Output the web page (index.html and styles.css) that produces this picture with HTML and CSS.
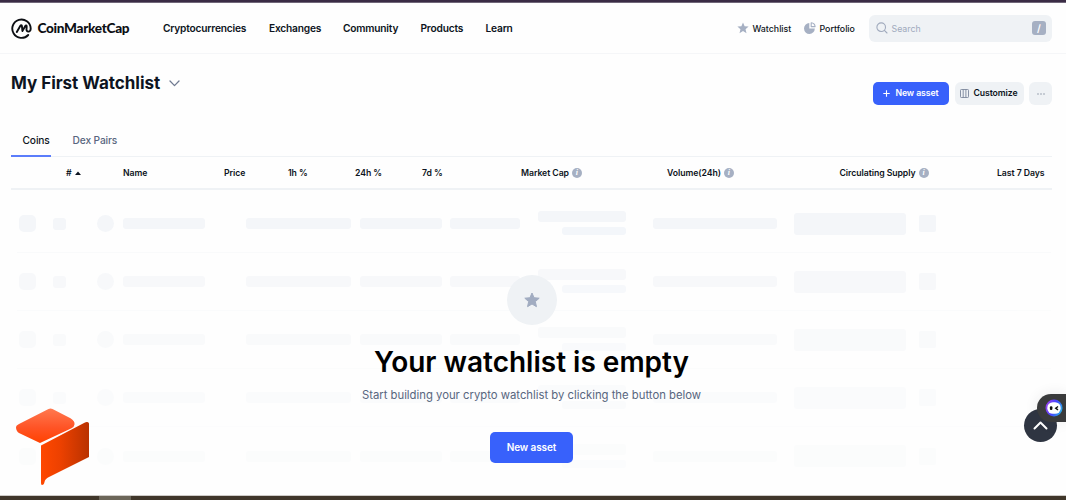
FILE: index.html
```html
<!DOCTYPE html>
<html lang="en">
<head>
<meta charset="utf-8">
<title>My First Watchlist | CoinMarketCap</title>
<link rel="stylesheet" href="styles.css">
</head>
<body>
<div class="page">
  <div class="strip-top"></div>
  <header class="header">
    <div class="brand">
      <svg class="brand-icon" width="21" height="21" viewBox="0 0 21 21" fill="none" stroke="#0d0f14" stroke-width="1.9" stroke-linecap="round" stroke-linejoin="round">
        <path d="M17.2 17A9.2 9.2 0 1 1 19.7 10.4C19.7 12.5 18.8 13.6 17.4 13.6C16 13.6 15.4 12.6 15.5 11.2L15.7 8.4C15.7 7.2 14.8 7.1 14.3 8L11.4 13L10.9 7.9C10.8 6.9 9.9 6.8 9.4 7.7L5.8 13.9"/>
      </svg>
      <span class="brand-name">CoinMarketCap</span>
    </div>
    <nav class="nav">
      <a class="n1">Cryptocurrencies</a><a class="n2">Exchanges</a><a class="n3">Community</a><a class="n4">Products</a><a class="n5">Learn</a>
    </nav>
    <div class="quick">
      <a class="q1"><svg width="12" height="12" viewBox="0 0 24 24" fill="#a6b0c3"><path d="M12 1l3.2 7.4 8 .7-6.100 5.300 1.900 7.900L12 18.100 5 22.300l1.900-7.900L.8 9.100l8-.7z"/></svg><span>Watchlist</span></a>
      <a class="q2"><svg width="12" height="12" viewBox="0 0 12 12" fill="#a6b0c3"><path d="M5.300 1.100v5.300h5.500A5.400 5.400 0 1 1 5.300 1.100z"/><path d="M7.200.7a4.300 4.300 0 0 1 3.900 3.900H7.200z" fill="none" stroke="#a6b0c3" stroke-width="1.100" stroke-linejoin="round"/></svg><span>Portfolio</span></a>
    </div>
    <div class="search">
      <svg width="12" height="12" viewBox="0 0 12 12" fill="none" stroke="#a0aabd" stroke-width="1.100" stroke-linecap="round"><circle cx="5.200" cy="5.200" r="4.300"/><path d="M8.400 8.400l2.600 2.600"/></svg>
      <span class="search-label">Search</span>
      <span class="key">/</span>
    </div>
  </header>

  <section class="titlebar">
    <div class="title"><h1>My First Watchlist</h1>
      <svg width="11" height="7" viewBox="0 0 11 7" fill="none" stroke="#6f7a91" stroke-width="1.300" stroke-linecap="round" stroke-linejoin="round"><path d="M1 1l4.500 4.600L10 1"/></svg>
    </div>
    <div class="actions">
      <button class="btn primary"><svg width="7" height="7" viewBox="0 0 7 7" stroke="#fff" stroke-width="1.100"><path d="M3.500.3v6.400M.3 3.500h6.400"/></svg><span>New asset</span></button>
      <button class="btn customize"><svg width="9" height="9" viewBox="0 0 9 9" fill="none" stroke="#7c879c" stroke-width=".9"><rect x=".5" y=".5" width="8" height="8" rx=".8"/><path d="M3.200.5v8M5.900.5v8"/></svg><span>Customize</span></button>
      <button class="btn more"><svg width="8" height="2" viewBox="0 0 8 2" fill="#7c879c"><circle cx="1" cy="1" r=".7"/><circle cx="4" cy="1" r=".7"/><circle cx="7" cy="1" r=".7"/></svg></button>
    </div>
  </section>

  <div class="tabs"><a class="tab active">Coins</a><a class="tab">Dex Pairs</a></div>

  <div class="thead">
    <span class="th">#<svg width="6" height="4" viewBox="0 0 6 4"><path d="M0 4L3 .6 6 4z" fill="#0d1421"/></svg></span>
    <span class="th">Name</span><span class="th">Price</span><span class="th">1h %</span><span class="th">24h %</span><span class="th">7d %</span>
    <span class="th">Market Cap<i class="info">i</i></span>
    <span class="th">Volume(24h)<i class="info">i</i></span>
    <span class="th">Circulating Supply<i class="info">i</i></span>
    <span class="th">Last 7 Days</span>
  </div>

  <main class="body">
    <div class="row r1"><b class="sq"></b><b class="num"></b><b class="coin"></b><b class="bar"></b><b class="bar"></b><b class="bar"></b><b class="bar"></b><div class="pair"><b></b><b></b></div><b class="bar"></b><b class="chart"></b><b class="end"></b></div>
    <div class="row r2"><b class="sq"></b><b class="num"></b><b class="coin"></b><b class="bar"></b><b class="bar"></b><b class="bar"></b><b class="bar"></b><div class="pair"><b></b><b></b></div><b class="bar"></b><b class="chart"></b><b class="end"></b></div>
    <div class="row r3"><b class="sq"></b><b class="num"></b><b class="coin"></b><b class="bar"></b><b class="bar"></b><b class="bar"></b><b class="bar"></b><div class="pair"><b></b><b></b></div><b class="bar"></b><b class="chart"></b><b class="end"></b></div>
    <div class="row r4"><b class="sq"></b><b class="num"></b><b class="coin"></b><b class="bar"></b><b class="bar"></b><b class="bar"></b><b class="bar"></b><div class="pair"><b></b><b></b></div><b class="bar"></b><b class="chart"></b><b class="end"></b></div>
    <div class="row r5"><b class="sq"></b><b class="num"></b><b class="coin"></b><b class="bar"></b><b class="bar"></b><b class="bar"></b><b class="bar"></b><div class="pair"><b></b><b></b></div><b class="bar"></b><b class="chart"></b><b class="end"></b></div>

    <div class="empty">
      <div class="empty-icon"><svg width="16" height="16" viewBox="0 0 24 24" fill="#a1acc1" stroke="#a1acc1" stroke-width="1.500" stroke-linejoin="round"><path d="M12 1.500l3.100 7.100 7.700.7-5.800 5.100 1.700 7.600L12 18l-6.700 4 1.700-7.600L1.200 9.300l7.700-.7z"/></svg></div>
      <h2>Your watchlist is empty</h2>
      <p>Start building your crypto watchlist by clicking the button below</p>
      <button class="empty-btn">New asset</button>
    </div>
  </main>

  <svg class="mark" width="76" height="79" viewBox="0 0 76 79">
    <defs>
      <linearGradient id="lid" x1="0" y1="0" x2="0" y2="1"><stop offset="0" stop-color="#ff7950"/><stop offset=".55" stop-color="#ff5426"/><stop offset="1" stop-color="#ff4200"/></linearGradient>
      <linearGradient id="side" x1="0" y1="0" x2="1" y2="0"><stop offset="0" stop-color="#ff4800"/><stop offset=".4" stop-color="#ed4100"/><stop offset="1" stop-color="#b93200"/></linearGradient>
    </defs>
    <path fill="url(#lid)" d="M33.500 1Q35.500 0 37.500 1L55.500 10.300Q60 13 59.500 16.500Q59.500 18.500 56 20.500L25 35L4 25Q1 23 1 19Q1 17.500 4 16Z"/>
    <path fill="url(#side)" d="M26 37.500L69 15Q73 13 74 15.500V49L34 69Q30 71 29.500 74Q29 77 27 77Q26 77 26 75Z"/>
  </svg>

  <div class="to-top"><svg width="15" height="9" viewBox="0 0 15 9" fill="none" stroke="#fff" stroke-width="2" stroke-linecap="round" stroke-linejoin="round"><path d="M1.500 7.500l6-6 6 6"/></svg></div>
  <div class="bot">
    <svg width="18" height="18" viewBox="0 0 18 18">
      <defs><linearGradient id="ring" x1="0" y1=".3" x2="1" y2=".7"><stop offset="0" stop-color="#9b3fee"/><stop offset=".5" stop-color="#4545ff"/><stop offset="1" stop-color="#27b5e8"/></linearGradient></defs>
      <circle cx="9" cy="9" r="8.500" fill="url(#ring)"/><rect x="2.300" y="3.200" width="13.400" height="11.600" rx="5.600" fill="#fff"/>
      <rect x="4.900" y="7.300" width="2.500" height="3.700" rx="1" fill="#111"/><path d="M13 7.500l-2.300 1.700 2.300 1.700" fill="none" stroke="#111" stroke-width="1.400"/>
    </svg>
  </div>
  <div class="strip-bottom"><i></i></div>
</div>
</body>
</html>
```
FILE: styles.css
```css
* { box-sizing: border-box; }
body { margin: 0; font-family: Inter, "Liberation Sans", sans-serif; color: #0d1421; }
h1, h2, p { margin: 0; }
button { border: 0; font-family: inherit; padding: 0; }
svg { display: block; flex: none; }
.page { position: relative; width: 1066px; height: 500px; overflow: hidden; background: #fefefe; display: flex; flex-direction: column; }
.strip-top { height: 3px; background: #3a2c45; border-bottom: 1px solid #706779; flex: none; }

.header { height: 51px; flex: none; display: flex; align-items: center; padding: 0 14px 0 11px; border-bottom: 1px solid #f5f6f8; }
.brand { width: 152px; display: flex; align-items: center; gap: 5.500px; }
.brand-name { font-family: Lato, sans-serif; font-weight: 900; font-size: 13.600px; letter-spacing: -.3px; color: #0d0f14; }
.nav { display: flex; width: 574px; font-size: 10.200px; font-weight: 600; letter-spacing: -.2px; }
.n1 { width: 106px; } .n2 { width: 74px; } .n3 { width: 77.500px; } .n4 { width: 65px; }
.quick { display: flex; width: 132px; font-size: 8.800px; font-weight: 500; }
.quick a { display: flex; align-items: center; gap: 3.500px; }
.q1 { width: 67px; }
.search { width: 183px; height: 27px; border-radius: 6px; background: #eff2f5; display: flex; align-items: center; padding: 0 6px 0 7px; color: #a0aabd; font-size: 8.800px; }
.search-label { margin-left: 3.500px; flex: 1; }
.key { width: 14px; height: 14px; border-radius: 3px; background: #a6b0c3; color: #fff; font-size: 10px; font-weight: 600; line-height: 14px; text-align: center; }

.titlebar { height: 70px; flex: none; display: flex; justify-content: space-between; padding: 0 14px 0 11px; }
.title { display: flex; align-items: center; gap: 9px; height: 57px; }
h1 { font-size: 17px; font-weight: 700; line-height: 24px; letter-spacing: -.03px; }
.title svg { margin-top: 2px; }
.actions { display: flex; gap: 6px; margin-top: 28px; }
.btn { height: 23px; border-radius: 6px; background: #eff2f5; display: flex; align-items: center; justify-content: center; font-size: 8.700px; font-weight: 600; letter-spacing: -.07px; color: #0d1421; }
.btn span { padding-bottom: 1.500px; }
.primary { width: 76px; background: #3861fb; color: #fff; gap: 5px; border-radius: 5px; }
.customize { width: 69px; gap: 4px; }
.more { width: 23px; }
.btn + .btn { margin-left: -.5px; }

.tabs { height: 33px; margin: 0 14px 0 11px; flex: none; border-bottom: 1px solid #eff2f5; display: flex; font-size: 10.200px; font-weight: 500; letter-spacing: -.12px; }
.tab { padding: 0 11.500px; line-height: 32px; color: #58667e; height: 33px; }
.tab.active { width: 40px; padding-right: 0; margin-right: 10px; color: #0d1421; border-bottom: 2px solid #5b7dfb; }

.thead { height: 33px; flex: none; margin: 0 14px 0 11px; padding-left: 55px; border-bottom: 2px solid #eff2f5; display: grid; grid-template-columns: 57px 101px 64px 67px 67px 99px 146px 172.500px 157.500px 50px; align-items: center; font-size: 8.700px; font-weight: 600; letter-spacing: -.06px; white-space: nowrap; }
.th { display: flex; align-items: center; gap: 3px; }
.info { width: 10px; height: 10px; border-radius: 50%; background: #a6b0c3; color: #fff; text-align: center; font: italic bold 8px/10px "Liberation Serif", serif; }

.body { flex: 1; position: relative; padding-top: 5px; }
.row { height: 58px; margin: 0 15px 0 17px; padding-left: 2px; display: grid; align-items: center; grid-template-columns: 34px 44px 26px 123px 114px 89.500px 88.500px 115px 141px 125px 17px; border-bottom: 1px solid #f9fafb; }
.row b { display: block; background: #f4f6f9; border-radius: 3px; }
.r2 { opacity: .64; } .r3 { opacity: .45; } .r4 { opacity: .3; } .r5 { opacity: .23; border: 0; }
.row .sq { width: 17px; height: 17px; border-radius: 5px; }
.num { width: 13px; height: 12px; }
.row .coin { width: 17px; height: 17px; border-radius: 50%; }
.bar { width: 82px; height: 11px; }
.bar:nth-child(5) { width: 105px; }
.bar:nth-child(7) { width: 70.500px; }
.bar:nth-child(9) { width: 124px; }
.pair { width: 88px; display: flex; flex-direction: column; align-items: flex-end; gap: 5px; margin-top: -1px; }
.pair b { width: 88px; height: 11px; }
.pair b + b { width: 64px; height: 8px; background: #f3f6fa; }
.chart { width: 112px; height: 22px; }
.row .end { width: 17px; height: 17px; border-radius: 2px; }

.empty { position: absolute; left: 0; right: 3px; top: 85px; display: flex; flex-direction: column; align-items: center; }
.empty-icon { width: 50px; height: 50px; border-radius: 50%; background: #eff2f5; display: flex; align-items: center; justify-content: center; }
h2 { margin-top: 19px; color: #000; font-size: 28px; font-weight: 600; line-height: 36px; }
p { margin-top: 6px; color: #58667e; font-size: 11.300px; line-height: 18px; }
.empty-btn { margin-top: 28px; width: 83px; height: 31px; border-radius: 5px; background: #3861fb; color: #fff; font-size: 10px; font-weight: 600; letter-spacing: -.1px; padding-bottom: 2px; }

.mark { position: absolute; left: 15px; top: 408px; }
.to-top { position: absolute; left: 1024px; top: 409px; width: 33px; height: 33px; border-radius: 50%; background: #2f3542; display: flex; align-items: center; justify-content: center; }
.bot { position: absolute; left: 1037px; top: 394px; width: 29px; height: 28px; border-radius: 14px 0 0 14px; background: #3a3b3c; padding: 5px 0 0 8px; box-shadow: 0 0 14px rgba(40, 45, 60, .09); }
.strip-bottom { position: absolute; left: 0; right: 0; bottom: 0; height: 5px; background: #40362a; border-top: 1px solid #cecbc8; padding-left: 99px; }
.strip-bottom i { display: block; width: 32px; height: 4px; background: #6b6558; }
```
